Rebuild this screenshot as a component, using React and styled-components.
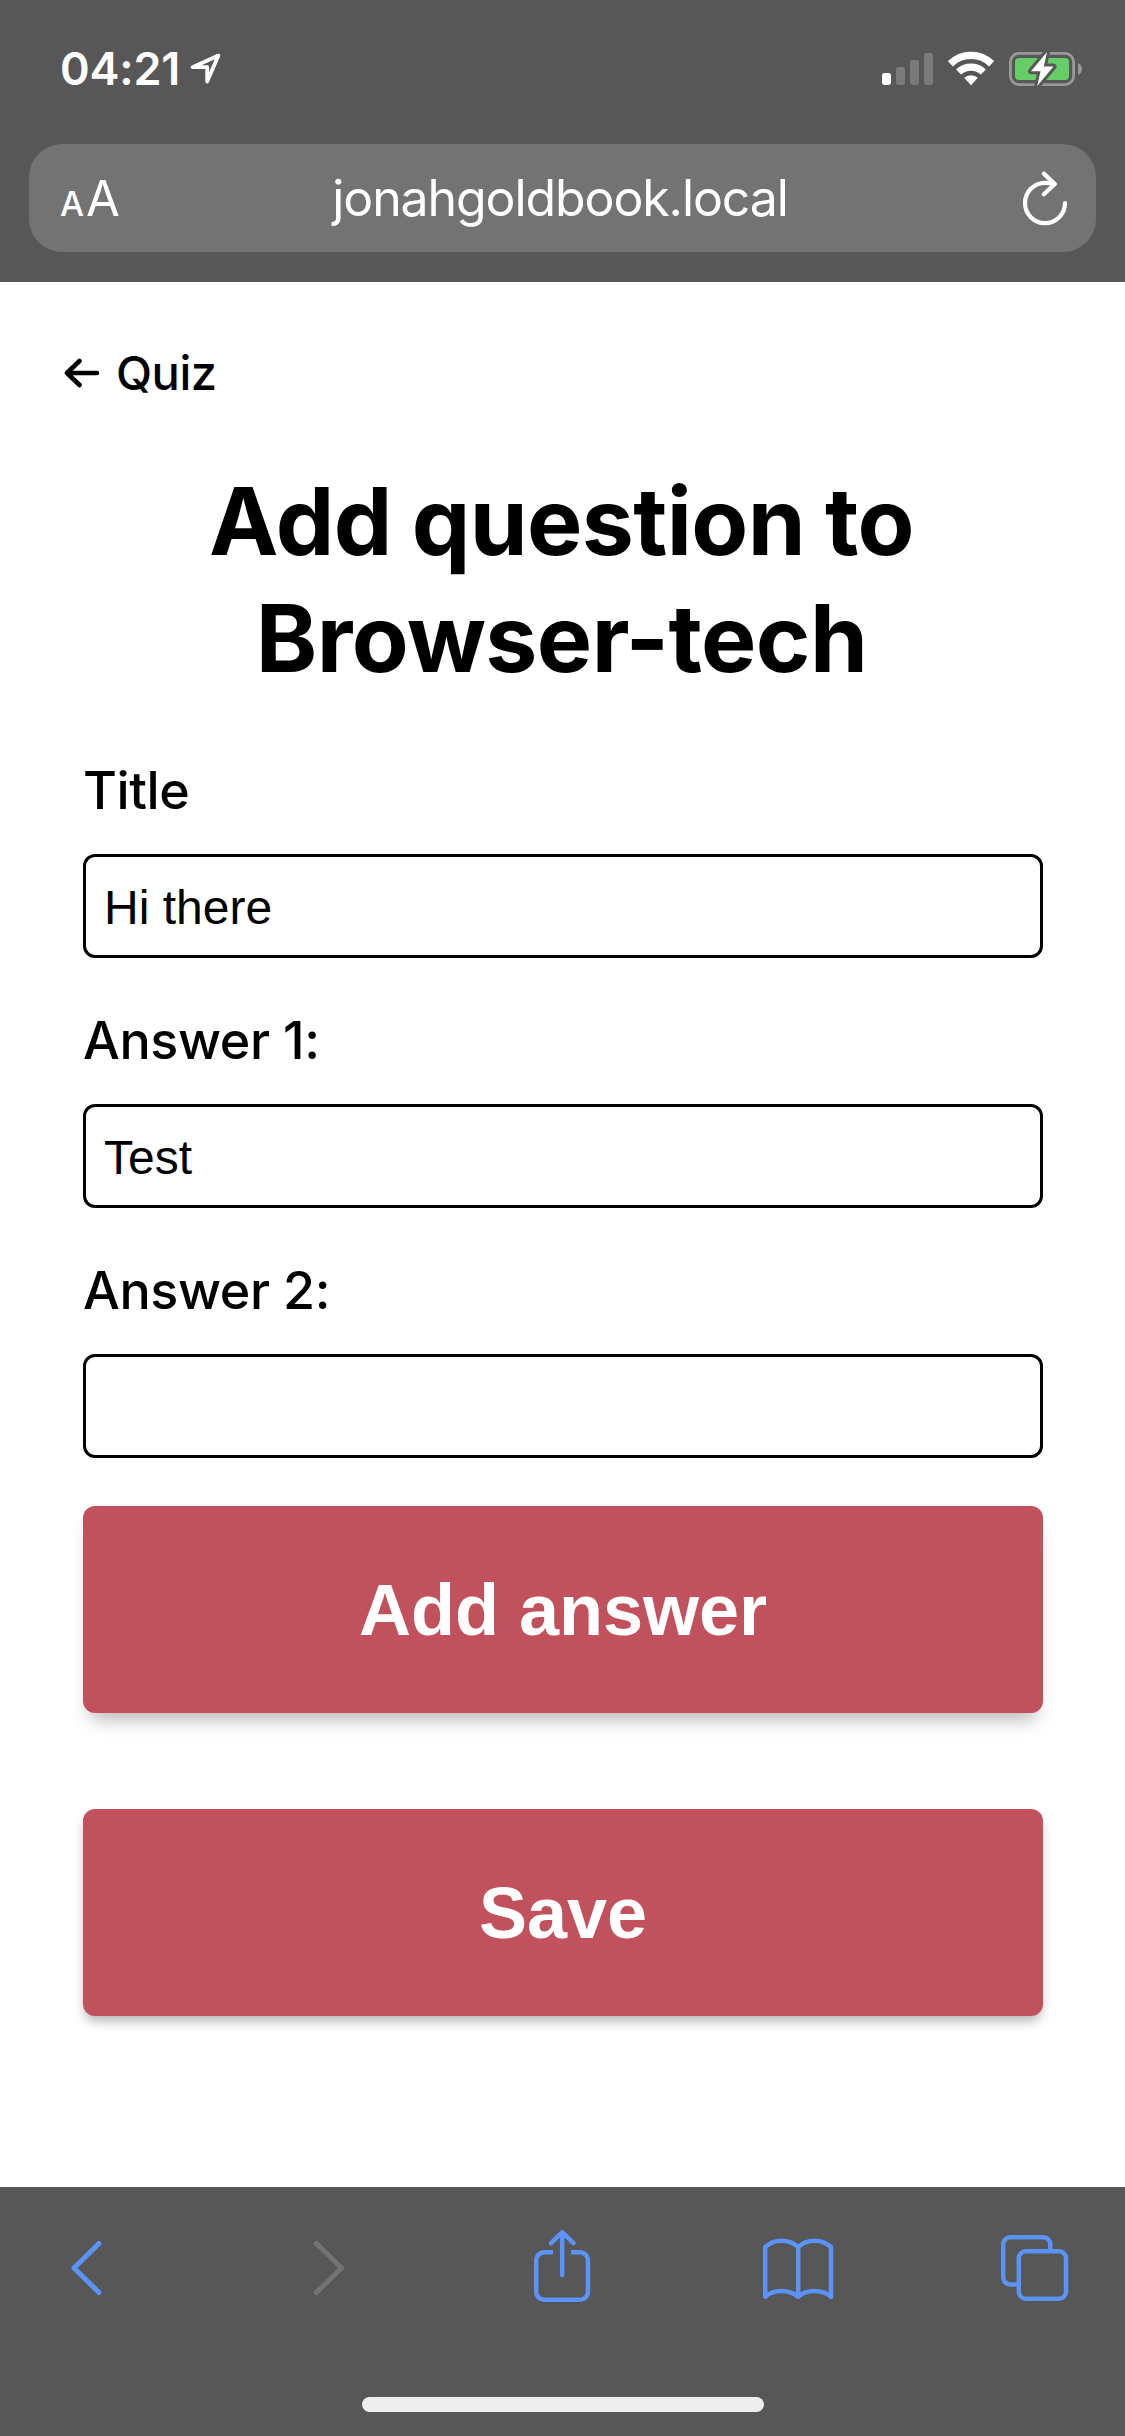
import React from "react";
import styled, { createGlobalStyle } from "styled-components";

const chrome = "#575757";
const blue = "#5b93f9";

const GlobalStyle = createGlobalStyle`
  *, *::before, *::after { box-sizing: border-box; }
  body { margin: 0; background: #fff; }
`;

const Screen = styled.div`
  width: 1125px;
  height: 2436px;
  display: flex;
  flex-direction: column;
  overflow: hidden;
  background: #fff;
  color: #000;
  font-family: Inter, "Liberation Sans", sans-serif;
`;

const BrowserHeader = styled.header`
  flex: none;
  height: 282px;
  background: ${chrome};
  color: #fff;
`;

const StatusBar = styled.div`
  height: 144px;
  padding: 41px 43px 0 60px;
  display: flex;
  align-items: flex-start;
`;

const Time = styled.span`
  font-size: 45px;
  line-height: 56px;
  font-weight: 600;
  letter-spacing: -0.2px;
`;

const LocationIcon = styled.svg`
  margin: 11px 0 0 9px;
`;

const StatusIcons = styled.div`
  display: flex;
  gap: 15px;
  margin: 10px 0 0 auto;
`;

const AddressBar = styled.div`
  height: 108px;
  margin: 0 29px;
  padding: 0 27px 0 31px;
  border-radius: 33px;
  background: #737373;
  display: grid;
  grid-template-columns: 61px 1fr 48px;
  align-items: center;
`;

const TextSize = styled.span`
  display: flex;
  align-items: baseline;
  gap: 2px;
  padding-top: 6px;
  line-height: 60px;
`;

const Letter = styled.span`
  font-size: ${(p) => p.$size}px;
  font-weight: ${(p) => p.$weight};
`;

const Address = styled.span`
  padding-right: 22px;
  text-align: center;
  font-size: 50px;
  line-height: 60px;
  font-weight: 400;
  letter-spacing: -1.1px;
`;

const Page = styled.main`
  flex: 1;
  padding: 0 83px;
`;

const BackLink = styled.a`
  display: flex;
  align-items: center;
  gap: 16px;
  margin-left: -19px;
  padding-top: 61px;
  font-size: 47px;
  line-height: 60px;
  font-weight: 500;
  letter-spacing: -0.5px;
`;

const Heading = styled.h1`
  margin: 60px 0 0;
  padding-right: 2px;
  font-size: 93px;
  line-height: 117px;
  font-weight: 700;
  text-align: center;
  letter-spacing: -0.6px;
  word-spacing: -1.5px;
`;

const Form = styled.form`
  display: flex;
  flex-direction: column;
  padding-top: 62px;
`;

const Fields = styled.div`
  display: flex;
  flex-direction: column;
  gap: 51px;
`;

const Actions = styled.div`
  display: flex;
  flex-direction: column;
  gap: 96px;
  margin-top: 48px;
`;

const Field = styled.label`
  display: flex;
  flex-direction: column;
  gap: 31px;
`;

const Label = styled.span`
  font-size: 52px;
  line-height: 64px;
  font-weight: 500;
  letter-spacing: -0.4px;
`;

const Input = styled.input`
  width: 960px;
  height: 104px;
  padding: 3px 18px 0;
  border: 3px solid #000;
  border-radius: 12px;
  background: #fff;
  color: #000;
  font: 48px "Liberation Sans", Arial, sans-serif;
  outline: none;
`;

const Button = styled.button`
  width: 960px;
  height: 207px;
  padding: 1px 0 0;
  border: 0;
  border-radius: 12px;
  background: #c1515c;
  color: #fff;
  font: bold 72px "Liberation Sans", Arial, sans-serif;
  box-shadow: ${(p) => (p.$raised ? "0 14px 18px -7px rgba(0,0,0,.27)" : "0 7px 12px -2px rgba(0,0,0,.3)")};
`;

const BrowserFooter = styled.footer`
  flex: none;
  height: 249px;
  background: ${chrome};
  display: flex;
  flex-direction: column;
  align-items: center;
  justify-content: space-between;
  padding-bottom: 24px;
`;

const Toolbar = styled.nav`
  width: 100%;
  padding: 42px 56px 0 70px;
  display: grid;
  grid-template-columns: 243px 220px 229px 238px 69px;
`;

const ToolIcon = styled.svg`
  display: block;
  fill: none;
  stroke: ${(p) => p.$color || blue};
  stroke-width: 4.5;
  stroke-linecap: round;
  stroke-linejoin: round;
`;

const HomeIndicator = styled.div`
  width: 402px;
  height: 15px;
  border-radius: 8px;
  background: #eee;
`;

function Status() {
  return (
    <StatusBar>
      <Time>04:21</Time>
      <LocationIcon width="32" height="33" viewBox="190 52 32 33" fill="none" stroke="#fff" strokeWidth="3.8" strokeLinejoin="round">
        <path d="M219.400 55.600 193.500 67.200H208.200V81.500Z" />
      </LocationIcon>
      <StatusIcons>
        <svg width="51" height="36" viewBox="882 51 51 36" fill="#7a7a7a">
          <rect x="882" y="73" width="9" height="12" rx="2.4" fill="#fff" />
          <rect x="896" y="67" width="9" height="18" rx="2.4" />
          <rect x="910" y="60" width="9" height="25" rx="2.4" />
          <rect x="924" y="53" width="9" height="32" rx="2.4" />
        </svg>
        <svg width="46" height="36" viewBox="948 51 46 36">
          <g fill="none" stroke="#fff" strokeWidth="7.2">
            <path d="M950.400 63.800a29.500 29.500 0 0 1 41.200 0" />
            <path d="M958.600 72a18 18 0 0 1 24.800 0" />
          </g>
          <path fill="#fff" d="M964.200 77.800a10 10 0 0 1 13.600 0L971 85.200Z" />
        </svg>
        <svg width="73" height="36" viewBox="1009 51 73 36">
          <rect x="1010.4" y="53.4" width="63.2" height="31.2" rx="8.5" fill="none" stroke="#999" strokeWidth="2.8" />
          <path fill="#999" d="M1078 63q4 2 4 6t-4 6Z" />
          <rect x="1015" y="58" width="54" height="22" rx="4" fill="#67ce67" />
          <path d="M1047 52 1031 71.200H1040.500L1037.200 86 1053.500 66.500H1043.800Z" fill="#fff" stroke={chrome} strokeWidth="6" paintOrder="stroke" strokeLinejoin="round" />
        </svg>
      </StatusIcons>
    </StatusBar>
  );
}

function FormField({ label, value }) {
  return (
    <Field>
      <Label>{label}</Label>
      <Input type="text" defaultValue={value} />
    </Field>
  );
}

export default function App() {
  return (
    <Screen>
      <GlobalStyle />
      <BrowserHeader>
        <Status />
        <AddressBar>
          <TextSize>
            <Letter $size={34} $weight={500}>A</Letter>
            <Letter $size={49} $weight={400}>A</Letter>
          </TextSize>
          <Address>jonahgoldbook.local</Address>
          <svg width="48" height="60" viewBox="1021 168 48 60" fill="none" stroke="#fff" strokeWidth="4.2" strokeLinecap="round" strokeLinejoin="round">
            <path d="M1065 203A20 20.200 0 1 1 1045 182.800Q1050 182.800 1054.500 184" />
            <path d="M1043.800 173.600 1054.800 184 1043.800 194.200" />
          </svg>
        </AddressBar>
      </BrowserHeader>
      <Page>
        <BackLink>
          <svg width="36" height="30" viewBox="64 358 36 30" fill="none" stroke="#000" strokeWidth="4.6" strokeLinecap="round" strokeLinejoin="round">
            <path d="M97 373H67M79.500 361 67 373l12.500 12" />
          </svg>
          Quiz
        </BackLink>
        <Heading>
          Add question to
          <br />
          Browser-tech
        </Heading>
        <Form>
          <Fields>
            <FormField label="Title" value="Hi there" />
            <FormField label="Answer 1:" value="Test" />
            <FormField label="Answer 2:" value="" />
          </Fields>
          <Actions>
            <Button type="button" $raised>Add answer</Button>
            <Button type="button">Save</Button>
          </Actions>
        </Form>
      </Page>
      <BrowserFooter>
        <Toolbar>
          <ToolIcon width="33" height="76" viewBox="70 2229 33 76">
            <path strokeWidth="5" d="M99 2243.500 74 2268l25 24.500" />
          </ToolIcon>
          <ToolIcon width="33" height="76" viewBox="313 2229 33 76" $color="#737373">
            <path strokeWidth="5" d="M316.300 2243.500 341.500 2268l-25.200 24.500" />
          </ToolIcon>
          <ToolIcon width="58" height="76" viewBox="533 2229 58 76">
            <path strokeLinecap="butt" d="M553 2252.300H544.200a8 8 0 0 0-8 8V2291.700a8 8 0 0 0 8 8H580a8 8 0 0 0 8-8V2260.300a8 8 0 0 0-8-8H571" />
            <path d="M562.200 2275V2232.200M551 2243.200 562.200 2232.200 573.500 2243.200" />
          </ToolIcon>
          <ToolIcon width="72" height="76" viewBox="762 2229 72 76">
            <path d="M798.200 2247C789 2238.500 774 2238.500 765.200 2247V2296.700C774 2289.200 789 2289.200 798.200 2296.700C807 2289.200 822 2289.200 831 2296.700V2247C822 2238.500 807 2238.500 798.200 2247V2296.700" />
          </ToolIcon>
          <ToolIcon width="69" height="76" viewBox="1000 2229 69 76">
            <path strokeLinecap="butt" d="M1017 2284.500h-6.800a7 7 0 0 1-7-7V2244.300a7 7 0 0 1 7-7H1043.300a7 7 0 0 1 7 7V2251" />
            <rect x="1018.800" y="2251.300" width="47.200" height="47.500" rx="7" />
          </ToolIcon>
        </Toolbar>
        <HomeIndicator />
      </BrowserFooter>
    </Screen>
  );
}
